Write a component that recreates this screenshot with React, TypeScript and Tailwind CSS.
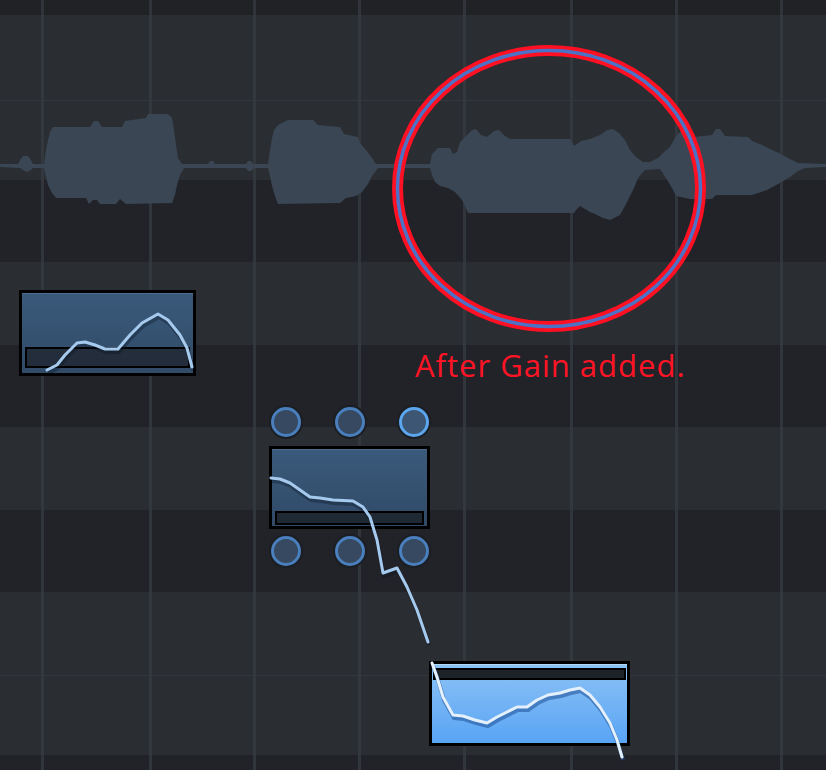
import React from "react";

const wave =
  "M0,164 L18,164 L20,160 L23,156 L28,156 L31,160 L33,164 L44,164 L46,150 L48,140 L50,132 L53,127 L90,127 L94,121 L98,121 L102,127 L122,127 L125,121 L146,118 L148,114 L168,114 L172,118 L174,130 L176,145 L178,158 L182,164 L208,164 L210,161 L213,161 L215,164 L246,164 L248,161 L251,161 L253,164 L268,164 L270,150 L272,138 L274,130 L278,125 L288,120 L313,120 L318,125 L340,127 L344,134 L358,137 L360,143 L366,150 L372,158 L376,164 L430,164 L432,154 L438,148 L450,148 L453,154 L457,152 L460,142 L466,136 L472,130 L476,129 L481,135 L487,137 L494,131 L499,130 L505,136 L510,139 L570,139 L574,146 L581,141 L590,139 L600,135 L607,130 L613,129 L619,133 L625,140 L630,150 L636,157 L643,162 L650,162 L658,158 L664,152 L670,147 L676,136 L682,130 L688,131 L694,137 L712,135 L716,129 L720,129 L725,136 L748,137 L752,141 L762,145 L772,150 L781,154 L790,159 L798,163 L826,164 " +
  "L826,167 L805,168 L798,171 L790,177 L780,183 L767,190 L752,195 L716,195 L712,199 L690,199 L676,196 L672,188 L666,178 L660,169 L645,170 L638,178 L634,188 L630,196 L625,206 L620,215 L610,220 L603,218 L595,214 L590,212 L580,206 L576,210 L574,213 L468,213 L465,206 L462,200 L455,192 L448,188 L440,186 L435,182 L432,175 L430,168 L378,168 L372,176 L368,184 L362,192 L356,196 L346,198 L340,203 L278,204 L275,196 L272,186 L270,176 L268,168 L254,168 L251,171 L248,171 L246,168 L184,168 L180,175 L177,185 L175,195 L172,203 L126,204 L120,199 L116,204 L100,204 L97,200 L93,200 L89,204 L86,198 L56,198 L52,193 L48,185 L46,177 L44,168 L33,168 L31,170 L27,172 L23,170 L20,168 L0,167 Z";

const curve1 =
  "M47,370 L57,365 L65,355 L77,343 L85,342 L95,345 L105,349 L118,349 L130,335 L142,323 L158,314 L168,320 L180,335 L187,348 L192,367";
const curve2 =
  "M271,478 L280,479 L290,483 L300,490 L310,497 L320,498 L333,500 L353,501 L363,507 L370,517 L377,540 L383,573 L397,568 L407,587 L417,610 L428,642";
const curve3 =
  "M432,663 L437,677 L443,697 L453,715 L463,716 L475,720 L487,723 L497,717 L507,712 L517,707 L527,707 L537,700 L548,695 L560,693 L570,690 L580,688 L590,695 L600,707 L610,723 L617,740 L622,757";

function Handle({ bright }: { bright?: boolean }) {
  return (
    <div
      className={`w-[30px] h-[30px] rounded-full border-[3px] shadow-[0_0_0_2px_#1b1e23] ${
        bright ? "border-[#5ca6ee] bg-[#3c5674]" : "border-[#4a7fbe] bg-[#374960]"
      }`}
    />
  );
}

export default function App() {
  return (
    <div className="relative w-[826px] h-[770px] overflow-hidden bg-[#212328]">
      {/* pitch rows */}
      <div className="flex flex-col h-full">
        <div className="h-[15px] bg-[#202226]" />
        <div className="h-[85px] bg-[#2a2d32]" />
        <div className="h-[1px] bg-[#33363c]" />
        <div className="h-[79px] bg-[#2a2d32]" />
        <div className="h-[82px] bg-[#212328]" />
        <div className="h-[83px] bg-[#2a2d32]" />
        <div className="h-[82px] bg-[#212328]" />
        <div className="h-[83px] bg-[#2a2d32]" />
        <div className="h-[82px] bg-[#212328]" />
        <div className="h-[83px] bg-[#2a2d32]" />
        <div className="h-[1px] bg-[#33363c]" />
        <div className="h-[79px] bg-[#2a2d32]" />
        <div className="flex-1 bg-[#212328]" />
      </div>

      {/* beat lines */}
      <div className="absolute inset-0 flex">
        <div className="w-[41px]" />
        <div className="w-[3px] bg-[#363a41]/80" />
        <div className="w-[105px]" />
        <div className="w-[3px] bg-[#363a41]/80" />
        <div className="w-[101px]" />
        <div className="w-[3px] bg-[#363a41]/80" />
        <div className="w-[102px]" />
        <div className="w-[3px] bg-[#363a41]/80" />
        <div className="w-[102px]" />
        <div className="w-[3px] bg-[#363a41]/80" />
        <div className="w-[104px]" />
        <div className="w-[3px] bg-[#363a41]/80" />
        <div className="w-[102px]" />
        <div className="w-[3px] bg-[#363a41]/80" />
        <div className="w-[102px]" />
        <div className="w-[3px] bg-[#363a41]/80" />
      </div>

      {/* waveform */}
      <svg className="absolute inset-0" width="826" height="770">
        <path d={wave} fill="#3a4654" />
      </svg>

      {/* note 1 */}
      <div className="absolute left-[19px] top-[290px] w-[177px] h-[86px] border-[3px] border-black bg-linear-to-b from-[#3a5a7b] to-[#304a67] shadow-[inset_0_1px_0_#4d6d8e] flex flex-col justify-end px-[3px] pb-[5px]">
        <div className="h-[21px] border-2 border-black bg-[#1c2026]/70" />
      </div>

      {/* note 2 */}
      <div className="absolute left-[269px] top-[446px] w-[161px] h-[83px] border-[3px] border-black bg-linear-to-b from-[#3a5a7b] to-[#304a67] shadow-[inset_0_1px_0_#4d6d8e] flex flex-col justify-end px-[3px] pb-[1px]">
        <div className="h-[14px] border-2 border-black bg-[#1c2026]/80" />
      </div>

      {/* note 3 (selected) */}
      <div className="absolute left-[429px] top-[661px] w-[201px] h-[85px] border-[3px] border-black bg-linear-to-b from-[#8cc2f4] to-[#58a4f5] shadow-[inset_0_1px_0_#b2d8fa] flex flex-col px-[1px] pt-[4px]">
        <div className="h-[12px] border-2 border-black bg-[#1e2329]" />
      </div>

      {/* handles */}
      <div className="absolute left-[271px] top-[407px] flex gap-[34px]">
        <Handle />
        <Handle />
        <Handle bright />
      </div>
      <div className="absolute left-[271px] top-[536px] flex gap-[34px]">
        <Handle />
        <Handle />
        <Handle />
      </div>

      {/* pitch curves */}
      <svg className="absolute inset-0" width="826" height="770" fill="none">
        <g transform="translate(1,3)" stroke="rgba(10,20,35,0.35)" strokeWidth="4" strokeLinejoin="round">
          <path d={curve1} />
          <path d={curve2} />
        </g>
        <path d={curve3} transform="translate(1,3)" stroke="rgba(30,80,150,0.55)" strokeWidth="4" strokeLinejoin="round" />
        <g stroke="#a6caee" strokeWidth="3" strokeLinejoin="round" strokeLinecap="round">
          <path d={curve1} />
          <path d={curve2} />
        </g>
        <path d={curve3} stroke="#e4f0fc" strokeWidth="3" strokeLinejoin="round" strokeLinecap="round" />
      </svg>

      {/* annotation */}
      <svg className="absolute inset-0" width="826" height="770" fill="none">
        <ellipse cx="549" cy="188.5" rx="151.5" ry="138" stroke="#ff1022" strokeWidth="11" />
        <ellipse cx="549" cy="188.5" rx="151.5" ry="138" stroke="#4b72c6" strokeWidth="3.5" />
      </svg>
      <div className="absolute left-[415px] top-[350px] text-[31px] leading-none tracking-[1px] text-[#ff1426] font-['Open_Sans',sans-serif] whitespace-nowrap">
        After Gain added.
      </div>
    </div>
  );
}
